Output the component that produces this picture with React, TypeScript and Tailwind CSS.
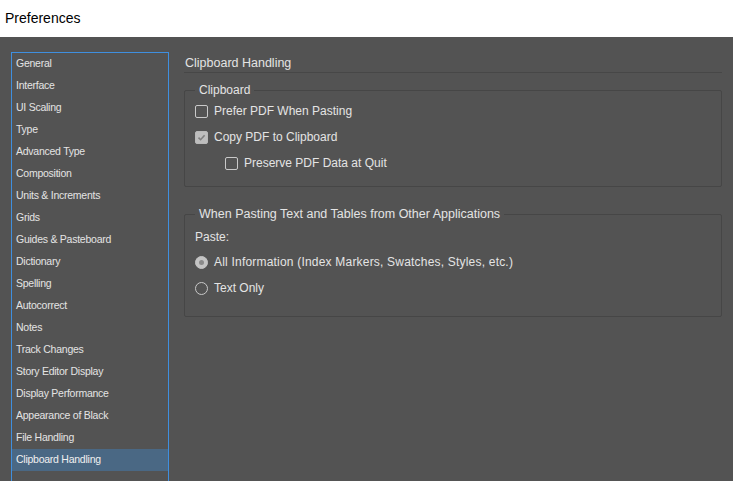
const sections = [
  "General",
  "Interface",
  "UI Scaling",
  "Type",
  "Advanced Type",
  "Composition",
  "Units & Increments",
  "Grids",
  "Guides & Pasteboard",
  "Dictionary",
  "Spelling",
  "Autocorrect",
  "Notes",
  "Track Changes",
  "Story Editor Display",
  "Display Performance",
  "Appearance of Black",
  "File Handling",
  "Clipboard Handling",
];

function Checkbox({ checked }: { checked?: boolean }) {
  return (
    <span
      className={
        "flex h-[13px] w-[13px] shrink-0 items-center justify-center rounded-[2px] border " +
        (checked ? "border-[#b8b8b8] bg-[#bdbdbd]" : "border-[#c9c9c9]")
      }
    >
      {checked && (
        <svg width="9" height="9" viewBox="0 0 9 9">
          <path d="M1.5 4.6 L3.6 6.7 L7.6 2.3" fill="none" stroke="#7e7e7e" strokeWidth="1.6" />
        </svg>
      )}
    </span>
  );
}

function Radio({ checked }: { checked?: boolean }) {
  return (
    <span
      className={
        "flex h-[13px] w-[13px] shrink-0 items-center justify-center rounded-full border " +
        (checked ? "border-[#c4c4c4] bg-[#c4c4c4]" : "border-[#c9c9c9]")
      }
    >
      {checked && <span className="h-[5px] w-[5px] rounded-full bg-[#8a8a8a]" />}
    </span>
  );
}

function Row({ children, indent }: { children: React.ReactNode; indent?: boolean }) {
  return (
    <div className={"flex h-[26px] items-center gap-[6px] " + (indent ? "pl-[30px]" : "")}>{children}</div>
  );
}

export default function App() {
  return (
    <div
      className="flex h-[481px] w-[733px] flex-col overflow-hidden"
      style={{ fontFamily: '"Liberation Sans", Arial, sans-serif' }}
    >
      <div className="flex h-[37px] shrink-0 items-center bg-white pl-[5px] text-[14px] text-black">
        Preferences
      </div>
      <div className="flex flex-1 bg-[#535353] text-[#e4e4e4]">
        <div className="ml-[11px] mt-[15px] h-[460px] w-[158px] shrink-0 border border-[#3f8fdf]">
          {sections.map((s) => (
            <div
              key={s}
              className={
                "flex h-[22px] items-center pl-[4px] text-[10.5px] tracking-[-0.25px] " +
                (s === "Clipboard Handling" ? "bg-[#4a6884] text-[#f0f0f0]" : "")
              }
            >
              {s}
            </div>
          ))}
        </div>
        <div className="ml-[15px] w-[538px] pt-[18px] text-[12px]">
          <div className="flex h-[18px] items-center border-b border-[#474747] pl-[1px] text-[12.5px]">
            Clipboard Handling
          </div>
          <fieldset className="mt-[10px] h-[104px] rounded-[2px] border border-[#464646] pl-[10px]">
            <legend className="px-[4px] text-[12px] leading-[14px]">Clipboard</legend>
            <div className="pt-[1px]">
              <Row>
                <Checkbox />
                <span>Prefer PDF When Pasting</span>
              </Row>
              <Row>
                <Checkbox checked />
                <span>Copy PDF to Clipboard</span>
              </Row>
              <Row indent>
                <Checkbox />
                <span>Preserve PDF Data at Quit</span>
              </Row>
            </div>
          </fieldset>
          <fieldset className="mt-[20px] h-[110px] rounded-[2px] border border-[#464646] pl-[10px]">
            <legend className="px-[4px] text-[12.5px] leading-[14px]">
              When Pasting Text and Tables from Other Applications
            </legend>
            <div className="pt-[4px]">
              <div className="flex h-[24px] items-center">Paste:</div>
              <Row>
                <Radio checked />
                <span className="tracking-[0.2px]">All Information (Index Markers, Swatches, Styles, etc.)</span>
              </Row>
              <Row>
                <Radio />
                <span>Text Only</span>
              </Row>
            </div>
          </fieldset>
        </div>
      </div>
    </div>
  );
}
